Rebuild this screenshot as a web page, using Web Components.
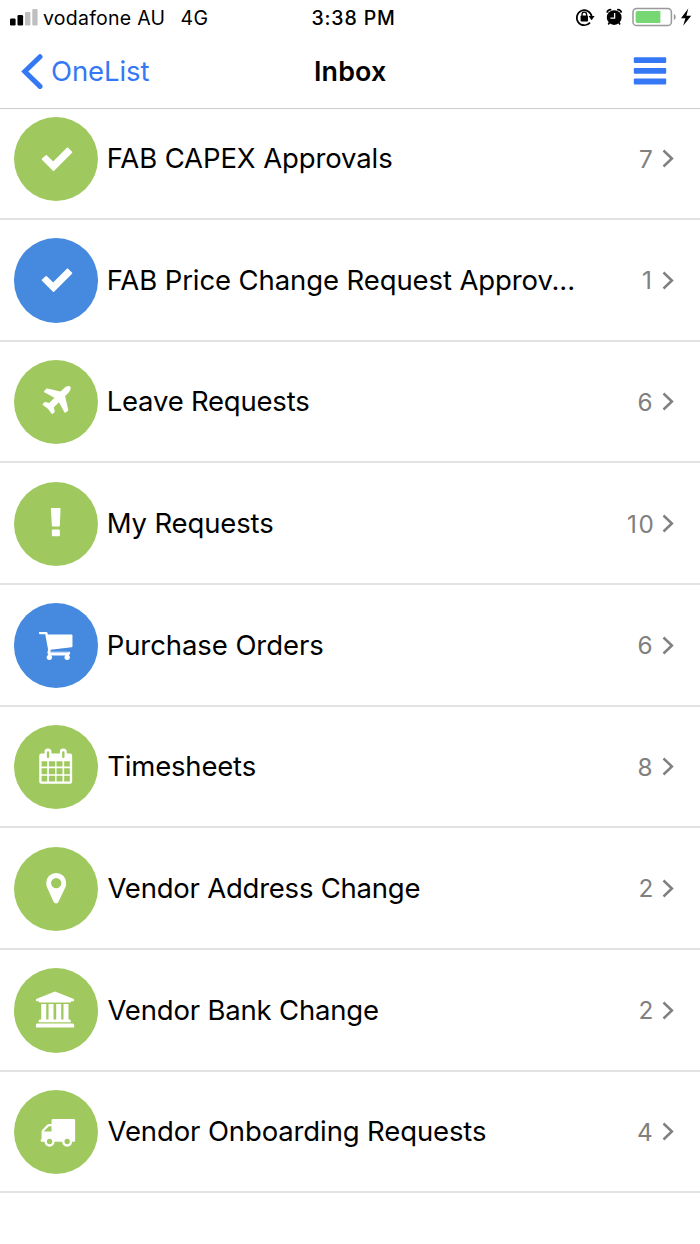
<!DOCTYPE html>
<html lang="en">
<head>
<meta charset="utf-8">
<title>Inbox</title>
<style>
html,body{margin:0;background:#fff}
body{width:700px;height:1244px;overflow:hidden;font-family:Inter,"Liberation Sans",sans-serif;color:#000}
</style>
</head>
<body>
<inbox-app></inbox-app>
<script>
const ctx = document.createElement('canvas').getContext('2d');

// One line of text whose ink is tracked to fill the given width.
class FitText extends HTMLElement {
  connectedCallback() {
    const size = +this.getAttribute('size'), weight = this.getAttribute('weight') || 400;
    const w = +this.getAttribute('w'), text = this.textContent;
    ctx.font = `${weight} ${size}px Inter, "Liberation Sans", sans-serif`;
    const m = ctx.measureText(text);
    const ink = m.actualBoundingBoxLeft + m.actualBoundingBoxRight;
    const sp = text.length > 1 ? (w - ink) / (text.length - 1) : 0;
    this.attachShadow({mode: 'open'}).innerHTML = `<style>
      :host{display:block;flex:none;width:${w}px;white-space:nowrap;font-size:${size}px;font-weight:${weight};line-height:1.3}
      span{display:inline-block;margin-left:${m.actualBoundingBoxLeft}px;letter-spacing:${sp}px}
    </style><span><slot></slot></span>`;
  }
}
customElements.define('fit-text', FitText);

class StatusBar extends HTMLElement {
  constructor() {
    super();
    this.attachShadow({mode: 'open'}).innerHTML = `<style>
      :host{display:flex;height:36px;align-items:center;box-sizing:border-box}
      svg{display:block;flex:none}
      fit-text{padding-top:2px}
      .sig{margin:0 5px 0 10px}.g{margin-left:18px}.t{margin-left:105px}
      .i{margin-left:180.500px}
    </style>
    <svg class="sig" width="28" height="36" viewBox="0 0 28 36"><rect y="18.5" width="5.6" height="7" rx="1.3"/><rect x="7.5" y="15" width="5.6" height="10.5" rx="1.3"/><g fill="#bfbfbf"><rect x="15" y="12" width="5.4" height="13.5" rx="1.3"/><rect x="22.3" y="9" width="5.3" height="16.5" rx="1.3"/></g></svg>
    <fit-text size="19.5" w="120.5">vodafone AU</fit-text>
    <fit-text class="g" size="19.5" w="26">4G</fit-text>
    <fit-text class="t" size="19.5" weight="500" w="81.5">3:38 PM</fit-text>
    <svg class="i" width="125" height="36" viewBox="575 0 125 36">
      <path d="M590 22.600A7.500 7.500 0 1 1 591.700 16.500" fill="none" stroke="#000" stroke-width="1.700"/>
      <path d="M588.6 16h6l-3 4.3z"/><rect x="580.6" y="15.500" width="7.4" height="6" rx=".8"/>
      <path d="M582 16.2v-1.700a2.3 2.3 0 0 1 4.6 0v1.700" fill="none" stroke="#000" stroke-width="1.3"/>
      <circle cx="614.2" cy="17.6" r="7.4"/><path d="M607.1 12.6a3.3 3.3 0 0 1 4.1-2.8M621.3 12.6a3.3 3.3 0 0 0-4.1-2.8" fill="none" stroke="#000" stroke-width="1.8"/><path d="M609.6 22.5l-1.3 2M618.8 22.5l1.3 2" fill="none" stroke="#000" stroke-width="1.5"/>
      <path d="M614.6 13v5.1h-4.2" fill="none" stroke="#fff" stroke-width="1.3"/>
      <rect x="633" y="8.4" width="38.4" height="17.2" rx="3.6" fill="none" stroke="#999" stroke-width="1.5"/>
      <path d="M673.8 13.8q2 1.2 2 3.2t-2 3.2z" fill="#999"/><path d="M637.5 11H660.4V23H637.5Q635.6 23 635.6 21V13Q635.6 11 637.5 11Z" fill="#77d772"/>
      <path d="M688.300 8.500l-7.300 9.800h4.4l-2.200 7.400 8-10h-4.800z"/>
    </svg>`;
  }
}
customElements.define('status-bar', StatusBar);

class NavBar extends HTMLElement {
  constructor() {
    super();
    this.attachShadow({mode: 'open'}).innerHTML = `<style>
      :host{display:flex;align-items:center;height:70px}
      svg{display:block;flex:none}
      .back{color:#3478f6;margin-left:9px;padding-top:2px}.title{margin-left:165.500px}
    </style>
    <svg width="43" height="70" viewBox="0 36 43 70"><path d="M40 56.700L24.800 71.500L40 86.400" fill="none" stroke="#3478f6" stroke-width="5" stroke-linecap="round" stroke-linejoin="miter"/></svg>
    <fit-text class="back" size="27.5" w="97.5">OneList</fit-text>
    <fit-text class="title" size="26.8" weight="600" w="71">Inbox</fit-text>
    <svg width="314" height="70" viewBox="386 36 314 70" fill="#3478f6"><rect x="633.8" y="57.3" width="32.4" height="5.8" rx="1"/><rect x="633.8" y="68" width="32.4" height="5.8" rx="1"/><rect x="633.8" y="78.6" width="32.4" height="5.8" rx="1"/></svg>`;
  }
}
customElements.define('nav-bar', NavBar);

const ICONS = {
  check: ['41 20 254 254', '<path d="M127 147l11-10 21 20 43-43 12 12-54 54z" stroke="#fff" stroke-width="5" stroke-linejoin="round"/>'],
  plane: ['41 30 254 254', '<path transform="translate(115.5 100) scale(.0604)" d="M1568 160q44 52 12 148t-108 172l-161 161 160 696q5 19-12 33l-128 96q-7 6-19 6-4 0-7-1-15-3-21-16l-279-508-259 259 53 194q5 17-8 31l-96 96q-9 9-23 9h-2q-15-2-24-13l-189-252-252-189q-11-7-13-23-1-13 9-25l96-97q9-9 23-9 6 0 8 1l194 53 259-259-508-279q-14-8-17-24-2-16 9-27l128-128q14-13 30-8l665 159 160-160q76-76 172-108t148 12z"/>'],
  alert: ['41 395 254 254', '<path d="M155 473h23q3 0 3 3l-2 50q0 3-3 3h-18q-3 0-3-3l-3-50q0-3 3-3z"/><rect x="155" y="538" width="24" height="20" rx="3"/>'],
  cart: ['41 39 254 254', '<path d="M120 126h18q3 0 4 3l1 5h71q3 0 3 3v32q0 3-3 3l-63 8v6h56q3 0 3 4t-3 4h-61q-4 0-4-4v-3q-1-4 2-6l-9-48h-15q-4 0-4-4t2-3z"/><circle cx="147.500" cy="202.500" r="8"/><circle cx="201" cy="202.500" r="8"/><path d="M144 192h63v5h-63z"/><path d="M150 188h55" stroke="#468ae0" stroke-width="1"/>'],
  calendar: ['41 405 254 254', '<path fill-rule="evenodd" d="M123 491h10v-5q0-10 10-10t11 10v5h25v-5q0-10 10-10t11 10v5h10q6 0 6 6v79q0 6-6 6h-87q-6 0-6-6v-79q0-6 6-6zM140 486v16q0 2 3.500 2t3.500-2v-16q0-2-3.500-2t-3.500 2zM186 486v16q0 2 3.500 2t3.500-2v-16q0-2-3.500-2t-3.500 2zM124 514v16h17v-16zM146 514v16h19v-16zM169 514v16h18v-16zM192 514v16h17v-16zM124 535v18h17v-18zM146 535v18h19v-18zM169 535v18h18v-18zM192 535v18h17v-18zM124 558v17h17v-17zM146 558v17h19v-17zM169 558v17h18v-17zM192 558v17h17v-17z"/>'],
  pin: ['41 35 254 254', '<path fill-rule="evenodd" d="M168 113a30 30 0 0 1 30 30q0 8-3 15l-20 42q-2 5-7 5t-8-5l-19-42q-3-7-3-15a30 30 0 0 1 30-30zm0 15a15.500 15.500 0 1 0 0 31 15.500 15.500 0 0 0 0-31z"/>'],
  bank: ['41 400 254 254', '<path d="M164.500 471l57 22v7h-8q0 4-4 4h-90q-4 0-4-4h-8v-7zM123 508h15v47h7v-47h15v47h8v-47h15v47h7v-47h15v47h3q4 0 4 6v2h-97v-2q0-6 4-6h4zM112 567h105q4 0 5 4v8H107v-8q1-4 5-4z"/>'],
  truck: ['41 60 254 254', '<path fill-rule="evenodd" d="M158 147h63q4 0 4 4v61q0 4-4 4h-5a15 15 0 0 1-30 0h-23a15 15 0 0 1-30 0h-8q-4 0-4-4t3-4v-22q0-4 3-7l13-14q3-3 7-3h7v-11q0-4 4-4zM154 169h-7q-2 0-3 2l-11 11q-1 1-1 3h22zM148 207a8 8 0 1 0 0 16 8 8 0 0 0 0-16zM201 207a8 8 0 1 0 0 16 8 8 0 0 0 0-16z"/>']
};

class CircleIcon extends HTMLElement {
  connectedCallback() {
    const [box, art] = ICONS[this.getAttribute('name')];
    this.attachShadow({mode: 'open'}).innerHTML = `<style>
      :host{display:block;flex:none;width:84.4px;height:84.4px;border-radius:50%;background:var(--tone)}
      svg{display:block;width:100%;height:100%}
    </style><svg viewBox="${box}" fill="#fff">${art}</svg>`;
  }
}
customElements.define('circle-icon', CircleIcon);

class InboxRow extends HTMLElement {
  connectedCallback() {
    const a = n => this.getAttribute(n);
    this.attachShadow({mode: 'open'}).innerHTML = `<style>
      :host{display:flex;align-items:center;box-sizing:border-box;height:121.67px;padding:1.2px 0 0 13.7px;border-bottom:2px solid #e2e2e2;--tone:${a('tone') === 'blue' ? '#468ae0' : '#9fc95e'}}
      .label{margin-left:${a('x') - 98.1}px}
      .count{margin-left:auto;color:#808080;padding-top:.8px}
      svg{display:block;flex:none;margin:0 26px 0 9.500px}
    </style>
    <circle-icon name="${a('icon')}"></circle-icon>
    <fit-text class="label" size="27.5" w="${a('w')}">${this.textContent}</fit-text>
    <fit-text class="count" size="24.3" w="${a('cw')}">${a('count')}</fit-text>
    <svg width="12" height="20" viewBox="0 0 12 20"><path d="M1.500 1.500l8.400 8-8.400 8" fill="none" stroke="#808080" stroke-width="2.500"/></svg>`;
  }
}
customElements.define('inbox-row', InboxRow);

class InboxApp extends HTMLElement {
  constructor() {
    super();
    this.attachShadow({mode: 'open'}).innerHTML = `<style>
      :host{display:flex;flex-direction:column;width:700px;height:1244px;background:#fff}
      header{height:109px;flex:none;box-sizing:border-box;background:#fff;border-bottom:1px solid #ccc;position:relative;z-index:1}
      main{margin-top:-10.5px}
    </style>
    <header><status-bar></status-bar><nav-bar></nav-bar></header>
    <main>
      <inbox-row icon="check" x="108.7" w="283.5" count="7" cw="12.5">FAB CAPEX Approvals</inbox-row>
      <inbox-row icon="check" tone="blue" x="108.7" w="464.500" count="1" cw="9.5">FAB Price Change Request Approv...</inbox-row>
      <inbox-row icon="plane" x="108.7" w="200.5" count="6" cw="14">Leave Requests</inbox-row>
      <inbox-row icon="alert" x="108.7" w="164.500" count="10" cw="24.500">My Requests</inbox-row>
      <inbox-row icon="cart" tone="blue" x="108.7" w="214.500" count="6" cw="14">Purchase Orders</inbox-row>
      <inbox-row icon="calendar" x="108.2" w="147.500" count="8" cw="14">Timesheets</inbox-row>
      <inbox-row icon="pin" x="107.500" w="312" count="2" cw="13">Vendor Address Change</inbox-row>
      <inbox-row icon="bank" x="107.500" w="270.500" count="2" cw="13">Vendor Bank Change</inbox-row>
      <inbox-row icon="truck" x="107.500" w="378.500" count="4" cw="14.500">Vendor Onboarding Requests</inbox-row>
    </main>`;
  }
}
customElements.define('inbox-app', InboxApp);
</script>
</body>
</html>
